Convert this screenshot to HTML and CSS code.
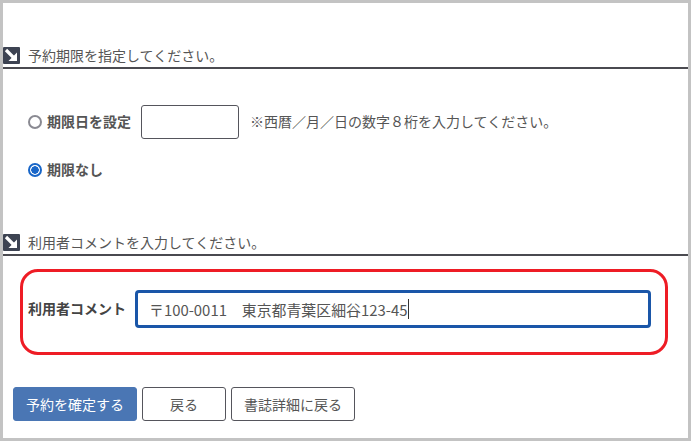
FILE: index.html
```html
<!DOCTYPE html>
<html lang="ja">
<head>
<meta charset="utf-8">
<title>予約</title>
<link rel="stylesheet" href="styles.css">
</head>
<body>
<main class="frame">
  <h2 class="heading">
    <svg class="arrow" viewBox="0 0 17 17"><rect width="17" height="17" rx="1" fill="#3d4352"/><path d="M3 3 L11.5 11.5" fill="none" stroke="#fff" stroke-width="3.2"/><path d="M14 5.5 V14 H5.5 Z" fill="#fff"/></svg>
    <span>予約期限を指定してください。</span>
  </h2>
  <div class="options">
    <div class="option option-date">
      <span class="radio"></span>
      <span class="option-label">期限日を設定</span>
      <span class="date-box"></span>
      <span class="note">※西暦／月／日の数字８桁を入力してください。</span>
    </div>
    <div class="option">
      <span class="radio radio-on"></span>
      <span class="option-label">期限なし</span>
    </div>
  </div>
  <h2 class="heading">
    <svg class="arrow" viewBox="0 0 17 17"><rect width="17" height="17" rx="1" fill="#3d4352"/><path d="M3 3 L11.5 11.5" fill="none" stroke="#fff" stroke-width="3.2"/><path d="M14 5.5 V14 H5.5 Z" fill="#fff"/></svg>
    <span>利用者コメントを入力してください。</span>
  </h2>
  <div class="comment">
    <span class="comment-label">利用者コメント</span>
    <div class="comment-input"><span>〒100-0011　東京都青葉区細谷123-45</span><i class="caret"></i></div>
  </div>
  <div class="actions">
    <span class="btn btn-primary">予約を確定する</span>
    <span class="btn btn-back">戻る</span>
    <span class="btn btn-detail">書誌詳細に戻る</span>
  </div>
</main>
</body>
</html>
```
FILE: styles.css
```css
* { box-sizing: border-box; }
html, body { margin: 0; padding: 0; }
body {
  width: 691px;
  height: 441px;
  overflow: hidden;
  background: #fff;
  font-family: "Noto Sans CJK JP", "Noto Sans", sans-serif;
  color: #555;
}
.frame {
  width: 691px;
  height: 441px;
  border: 3px solid #c3c3c3;
  padding-top: 44px;
}
.heading {
  display: flex;
  align-items: center;
  gap: 8px;
  margin: 0;
  height: 22px;
  padding-bottom: 3px;
  font-size: 14px;
  font-weight: 400;
  color: #555;
  border-bottom: 2px solid #4a4a50;
  line-height: 17px;
}
.arrow { width: 17px; height: 17px; flex: none; }
.options {
  padding: 36px 0 0 25px;
  height: 165px;
}
.option {
  display: flex;
  align-items: center;
  height: 34px;
}
.option-date { margin-bottom: 14px; }
.radio {
  width: 14px;
  height: 14px;
  flex: none;
  border-radius: 50%;
  border: 2px solid #8a8a92;
  margin-right: 5px;
}
.radio-on {
  border-color: #1866c8;
  background: radial-gradient(circle, #1866c8 0 3.5px, #fff 4px);
}
.option-label { font-size: 14px; font-weight: 700; color: #555; padding-bottom: 2px; }
.date-box {
  width: 98px;
  height: 34px;
  margin: 0 11px 0 10px;
  border: 1px solid #55555c;
  border-radius: 3px;
}
.note { font-size: 14px; color: #555; padding-bottom: 2px; }
.comment {
  display: flex;
  align-items: center;
  gap: 9px;
  width: 648px;
  height: 86px;
  margin: 13px 0 0 17px;
  padding: 0 0 6px 5px;
  border: 3px solid #ee1c25;
  border-radius: 18px;
}
.comment-label { font-size: 14px; font-weight: 700; color: #444; white-space: nowrap; padding-bottom: 2px; }
.comment-input {
  display: flex;
  align-items: center;
  width: 516px;
  height: 38px;
  padding-left: 11px;
  border: 3px solid #1a56a8;
  border-radius: 4px;
  font-size: 14.9px;
  color: #555;
  white-space: nowrap;
}
.caret { width: 1px; height: 20px; background: #333; margin-left: 1px; }
.actions {
  display: flex;
  gap: 5px;
  margin: 32px 0 0 10px;
}
.btn {
  display: flex;
  align-items: center;
  justify-content: center;
  height: 34px;
  border: 1px solid #55555c;
  border-radius: 3px;
  font-size: 14px;
  color: #555;
  background: #fff;
}
.btn-primary { width: 124px; background: #4a76b4; border-color: #4a76b4; color: #fff; }
.btn-back { width: 84px; }
.btn-detail { width: 124px; }
```
